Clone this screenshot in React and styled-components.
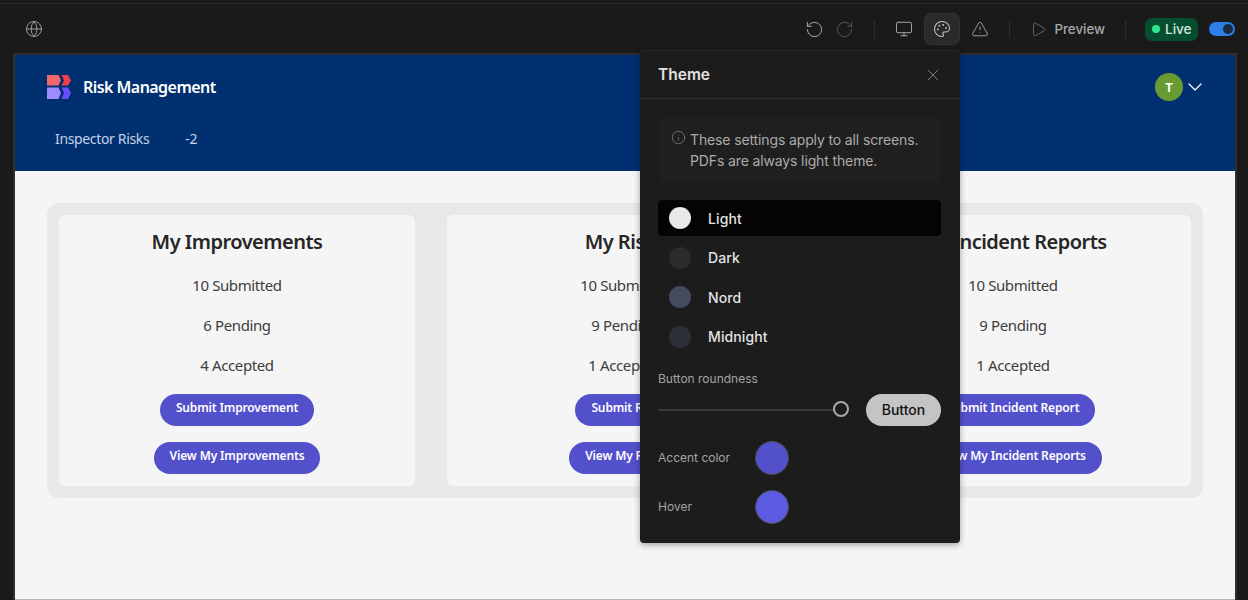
import React from 'react';
import styled, { createGlobalStyle } from 'styled-components';
import {
  ChevronDown, Globe, Info, Monitor, Palette, Play, RotateCcw, RotateCw, TriangleAlert, X,
} from 'lucide-react';

const summaryCards = [
  {
    title: 'My Improvements',
    stats: ['10 Submitted', '6 Pending', '4 Accepted'],
    actions: ['Submit Improvement', 'View My Improvements'],
  },
  {
    title: 'My Risks',
    stats: ['10 Submitted', '9 Pending', '1 Accepted'],
    actions: ['Submit Risk', 'View My Risks'],
  },
  {
    title: 'My Incident Reports',
    stats: ['10 Submitted', '9 Pending', '1 Accepted'],
    actions: ['Submit Incident Report', 'View My Incident Reports'],
  },
];

const themes = [
  { name: 'Light', swatch: '#e8e8e8' },
  { name: 'Dark', swatch: '#2b2b2b' },
  { name: 'Nord', swatch: '#434c5e' },
  { name: 'Midnight', swatch: '#2a2f3a' },
];

const Logo = () => (
  <svg width="24" height="24" viewBox="0 0 24 24">
    <path d="M0 0h11.5l2.5 5-2.5 5.5H0z" fill="#f2666c" />
    <path d="M14.5 0H21l3 5.5-3 5h-6.5l2.5-5z" fill="#ef3e4a" />
    <path d="M0 12.5h11.5l2.5 5.500-2.500 6H0z" fill="#9d8cff" />
    <path d="M14.500 12.500H21l3 5.500-3 6h-6.500l2.500-6z" fill="#6a4dff" />
  </svg>
);

const App = () => (
  <>
    <GlobalStyle />
    <Shell>
      <TopBar>
        <IconSlot><Globe size={18} strokeWidth={1.2} /></IconSlot>
        <ToolGroup>
          <ToolCluster $gap={11}>
            <IconSlot><RotateCcw size={19} strokeWidth={1.25} /></IconSlot>
            <IconSlot $dim><RotateCw size={19} strokeWidth={1.25} /></IconSlot>
          </ToolCluster>
          <Divider />
          <ToolCluster $gap={11}>
            <IconSlot><Monitor size={18} strokeWidth={1.3} /></IconSlot>
            <ToolButton><Palette size={18} strokeWidth={1.4} /></ToolButton>
            <IconSlot><TriangleAlert size={18} strokeWidth={1.2} /></IconSlot>
          </ToolCluster>
          <Divider />
          <PreviewLink>
            <Play size={17} strokeWidth={1.1} />
            Preview
          </PreviewLink>
          <Divider />
          <LiveCluster>
            <LivePill>
              <LiveDot />
              Live
            </LivePill>
            <Toggle />
          </LiveCluster>
        </ToolGroup>
      </TopBar>

      <Frame>
        <Header>
          <HeaderTop>
            <Brand>
              <Logo />
              <BrandName>Risk Management</BrandName>
            </Brand>
            <UserMenu>
              <Avatar>T</Avatar>
              <ChevronDown size={24} strokeWidth={1.2} />
            </UserMenu>
          </HeaderTop>
          <Nav>
            <NavItem>Inspector Risks</NavItem>
            <NavItem>-2</NavItem>
          </Nav>
        </Header>

        <Content>
          <CardGroup>
            {summaryCards.map((card) => (
              <Card key={card.title}>
                <CardTitle>{card.title}</CardTitle>
                {card.stats.map((stat) => <Stat key={stat}>{stat}</Stat>)}
                <CardActions>
                  {card.actions.map((action) => <ActionButton key={action}>{action}</ActionButton>)}
                </CardActions>
              </Card>
            ))}
          </CardGroup>
        </Content>
      </Frame>

      <ThemePanel>
        <PanelHeader>
          <PanelTitle>Theme</PanelTitle>
          <CloseIcon><X size={20} strokeWidth={1.1} /></CloseIcon>
        </PanelHeader>
        <PanelBody>
          <Notice>
            <NoticeIcon><Info size={15} strokeWidth={1.1} /></NoticeIcon>
            <span>
              These settings apply to all screens.
              <br />
              PDFs are always light theme.
            </span>
          </Notice>
          <ThemeList>
            {themes.map((theme) => (
              <ThemeRow key={theme.name} $active={theme.name === 'Light'}>
                <Swatch $color={theme.swatch} />
                {theme.name}
              </ThemeRow>
            ))}
          </ThemeList>
          <FieldLabel>Button roundness</FieldLabel>
          <SliderRow>
            <SliderTrack>
              <SliderThumb />
            </SliderTrack>
            <SampleButton>Button</SampleButton>
          </SliderRow>
          <ColorRow>
            <ColorLabel>Accent color</ColorLabel>
            <ColorDot $color="#5350cb" />
          </ColorRow>
          <ColorRow>
            <ColorLabel>Hover</ColorLabel>
            <ColorDot $color="#5c5ae0" />
          </ColorRow>
        </PanelBody>
      </ThemePanel>
    </Shell>
  </>
);

const GlobalStyle = createGlobalStyle`
  html, body {
    margin: 0;
    height: 600px;
    overflow: hidden;
    background: #1a1a1a;
  }
`;

const Shell = styled('div')`
  position: relative;
  width: 1248px;
  height: 600px;
  display: flex;
  flex-direction: column;
  background: #1a1a1a;
  padding-top: 3px;
  box-sizing: border-box;
  font-family: 'Inter', sans-serif;
`;

const TopBar = styled('div')`
  height: 50px;
  flex-shrink: 0;
  display: flex;
  align-items: center;
  justify-content: space-between;
  box-sizing: border-box;
  padding: 1px 13px 0 25px;
  border-top: 1px solid #2b2b2b;
  color: #a8a8a8;
`;

const IconSlot = styled('div')`
  display: flex;
  align-items: center;
  justify-content: center;
  color: ${(props) => (props.$dim ? '#565656' : '#a8a8a8')};
`;

const ToolGroup = styled('div')`
  display: flex;
  align-items: center;
  gap: 20px;
`;

const ToolCluster = styled('div')`
  display: flex;
  align-items: center;
  gap: ${(props) => props.$gap}px;
`;

const LiveCluster = styled('div')`
  display: flex;
  align-items: center;
  gap: 11px;
  margin-left: -1px;
`;

const Divider = styled('div')`
  width: 1px;
  height: 18px;
  background: #2e2e2e;
`;

const ToolButton = styled('div')`
  width: 36px;
  height: 32px;
  display: flex;
  align-items: center;
  justify-content: center;
  border-radius: 7px;
  background: #2a2a2a;
  border: 1px solid #333;
  box-sizing: border-box;
  color: #c4c4c4;
`;

const PreviewLink = styled('div')`
  display: flex;
  align-items: center;
  gap: 7px;
  font-size: 13.3px;
  font-weight: 500;
  color: #a8a8a8;
  svg { color: #777; }
`;

const LivePill = styled('div')`
  width: 53px;
  height: 23px;
  padding-left: 7px;
  box-sizing: border-box;
  display: flex;
  align-items: center;
  gap: 5px;
  border-radius: 7px;
  background: #064e30;
  color: #d5e8dd;
  font-size: 13.5px;
  font-weight: 500;
`;

const LiveDot = styled('span')`
  width: 8px;
  height: 8px;
  border-radius: 50%;
  background: #2ee58e;
`;

const Toggle = styled('div')`
  width: 26px;
  height: 14px;
  border-radius: 7px;
  background: #2f7de8;
  position: relative;

  &::after {
    content: '';
    position: absolute;
    top: 2px;
    right: 2px;
    width: 10px;
    height: 10px;
    border-radius: 50%;
    background: #1c2a3f;
  }
`;

const Frame = styled('div')`
  flex: 1;
  margin: 0 11px 0 13px;
  display: flex;
  flex-direction: column;
  background: #f5f5f5;
  border: 2px solid #2e2e2e;
  border-bottom: 0;
  min-height: 0;
`;

const Header = styled('header')`
  height: 116px;
  background: #003070;
  color: #fff;
  font-family: 'Noto Sans', sans-serif;
  box-sizing: border-box;
  padding: 18px 28px 0 32px;
  flex-shrink: 0;
`;

const HeaderTop = styled('div')`
  display: flex;
  align-items: center;
  justify-content: space-between;
`;

const Brand = styled('div')`
  display: flex;
  align-items: center;
  gap: 12px;
`;

const BrandName = styled('span')`
  font-size: 16px;
  font-weight: 600;
  letter-spacing: -0.55px;
`;

const UserMenu = styled('div')`
  display: flex;
  align-items: center;
`;

const Avatar = styled('div')`
  width: 28px;
  height: 28px;
  border-radius: 50%;
  background: #6a9a34;
  display: flex;
  align-items: center;
  justify-content: center;
  font-family: 'Inter', sans-serif;
  font-size: 12px;
  font-weight: 700;
`;

const Nav = styled('nav')`
  display: flex;
  gap: 36px;
  margin: 28px 0 0 8px;
`;

const NavItem = styled('span')`
  font-size: 14px;
  letter-spacing: -0.35px;
  color: #c5d3e8;
`;

const Content = styled('main')`
  flex: 1;
  padding: 32px 32px 0;
  font-family: 'Noto Sans', sans-serif;
  border-bottom: 1px solid #b4b4b4;
`;

const CardGroup = styled('div')`
  display: grid;
  grid-template-columns: repeat(3, 356px);
  gap: 32px;
  padding: 12px;
  border-radius: 12px;
  background: #e8e8e8;
`;

const Card = styled('section')`
  height: 271px;
  border-radius: 6px;
  background: #f5f5f5;
  display: flex;
  flex-direction: column;
  align-items: center;
  padding-top: 14px;
  box-sizing: border-box;
  color: #3d3d3d;
`;

const CardTitle = styled('h2')`
  margin: 0 0 10px;
  height: 26px;
  line-height: 26px;
  font-size: 20px;
  font-weight: 600;
  letter-spacing: -0.5px;
  color: #262626;
`;

const Stat = styled('div')`
  height: 40px;
  line-height: 40px;
  font-size: 15px;
  letter-spacing: -0.4px;
`;

const CardActions = styled('div')`
  display: flex;
  flex-direction: column;
  align-items: center;
  gap: 16px;
  margin-top: 9px;
`;

const ActionButton = styled('button')`
  height: 32px;
  padding: 0 16px 5px;
  border: 0;
  border-radius: 16px;
  background: #5350cb;
  color: #fff;
  font-family: 'Noto Sans', sans-serif;
  font-size: 12px;
  font-weight: 600;
  letter-spacing: -0.15px;
  white-space: nowrap;
`;

const ThemePanel = styled('aside')`
  position: absolute;
  left: 640px;
  top: 50px;
  width: 320px;
  height: 493px;
  background: #1c1c1c;
  border-radius: 4px;
  box-shadow: 0 2px 6px rgba(0, 0, 0, 0.35);
  border-top: 1px solid #2a2a2a;
  box-sizing: border-box;
`;

const PanelHeader = styled('div')`
  height: 47px;
  display: flex;
  align-items: center;
  justify-content: space-between;
  padding: 0 17px 0 18px;
  border-bottom: 1px solid #303030;
`;

const PanelTitle = styled('span')`
  font-size: 15.5px;
  font-weight: 600;
  color: #e2e2e2;
`;

const CloseIcon = styled('span')`
  display: flex;
  color: #8a8a8a;
`;

const PanelBody = styled('div')`
  padding: 18px 19px 0 18px;
`;

const Notice = styled('div')`
  display: flex;
  gap: 4px;
  height: 65px;
  padding: 12px 13px;
  box-sizing: border-box;
  border-radius: 4px;
  background: #1f1f1f;
  font-size: 14px;
  letter-spacing: -0.13px;
  line-height: 21px;
  color: #ababab;
`;

const NoticeIcon = styled('span')`
  display: flex;
  height: 15px;
  margin-top: 1px;
  flex-shrink: 0;
  color: #8a8a8a;
`;

const ThemeList = styled('div')`
  margin-top: 18px;
  display: flex;
  flex-direction: column;
  gap: 3.5px;
`;

const ThemeRow = styled('div')`
  height: 36px;
  display: flex;
  align-items: center;
  gap: 17px;
  padding: 0 11px;
  border-radius: 4px;
  background: ${(props) => (props.$active ? '#040404' : 'transparent')};
  font-size: 14px;
  letter-spacing: 0.1px;
  font-weight: 500;
  color: #e2e2e2;
`;

const Swatch = styled('span')`
  width: 22px;
  height: 22px;
  border-radius: 50%;
  background: ${(props) => props.$color};
`;

const FieldLabel = styled('div')`
  margin-top: 16px;
  font-size: 12px;
  line-height: 15px;
  color: #a3a3a3;
`;

const SliderRow = styled('div')`
  display: flex;
  align-items: center;
  justify-content: space-between;
  margin-top: 8px;
`;

const SliderTrack = styled('div')`
  position: relative;
  width: 190px;
  height: 2px;
  background: #3c3c3c;
`;

const SliderThumb = styled('span')`
  position: absolute;
  right: -1px;
  top: -8px;
  width: 16px;
  height: 16px;
  box-sizing: border-box;
  border-radius: 50%;
  border: 2px solid #a8a8a8;
  background: #1c1c1c;
`;

const SampleButton = styled('div')`
  width: 75px;
  height: 32px;
  border-radius: 16px;
  background: #c4c4c4;
  color: #111;
  font-size: 14px;
  font-weight: 500;
  display: flex;
  align-items: center;
  justify-content: center;
`;

const ColorRow = styled('div')`
  display: flex;
  align-items: center;
  height: 34px;
  margin-top: 15px;
`;

const ColorLabel = styled('span')`
  width: 97px;
  font-size: 12px;
  color: #a3a3a3;
`;

const ColorDot = styled('span')`
  width: 34px;
  height: 34px;
  box-sizing: border-box;
  border-radius: 50%;
  border: 1px solid #4a4a4a;
  background: ${(props) => props.$color};
`;

export default App;
